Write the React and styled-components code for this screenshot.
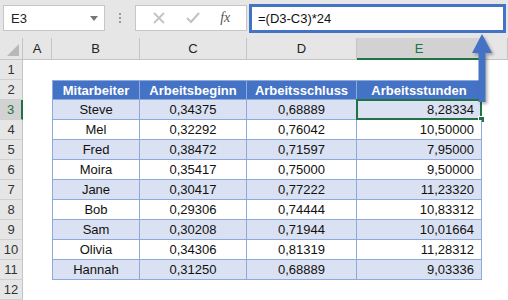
import React from "react";
import styled, { createGlobalStyle } from "styled-components";

const GlobalStyle = createGlobalStyle`
  html, body {
    margin: 0;
    padding: 0;
    background: #ffffff;
  }
  body {
    font-family: "Liberation Sans", Arial, sans-serif;
  }
`;

const Window = styled.div`
  position: relative;
  width: 508px;
  height: 300px;
  overflow: hidden;
  background: #ffffff;
`;

const Toolbar = styled.div`
  display: flex;
  align-items: flex-start;
  height: 38px;
  padding: 5px 0 0 3px;
  box-sizing: border-box;
  background: #e6e6e6;
`;

const NameBox = styled.div`
  display: flex;
  align-items: center;
  justify-content: space-between;
  width: 102px;
  height: 26px;
  padding: 0 6px 0 7px;
  box-sizing: border-box;
  background: #ffffff;
  border: 1px solid #c6c6c6;
  font-size: 13px;
  color: #222;
`;

const Caret = styled.span`
  width: 0;
  height: 0;
  border-left: 4px solid transparent;
  border-right: 4px solid transparent;
  border-top: 5px solid #777;
`;

const Grip = styled.div`
  display: flex;
  flex-direction: column;
  gap: 2px;
  width: 30px;
  align-items: center;
  padding-top: 8px;

  span {
    width: 2px;
    height: 2px;
    background: #9a9a9a;
  }
`;

const FxButtons = styled.div`
  display: flex;
  align-items: center;
  justify-content: space-around;
  width: 112px;
  height: 26px;
  padding: 0 6px;
  box-sizing: border-box;
  background: #ffffff;
  border: 1px solid #c6c6c6;
`;

const FxLabel = styled.span`
  font-family: "Liberation Serif", serif;
  font-style: italic;
  font-size: 14px;
  color: #555;
`;

const Formula = styled.div`
  display: flex;
  align-items: center;
  width: 257px;
  height: 29px;
  margin: -1px 0 0 2px;
  padding-left: 6px;
  box-sizing: border-box;
  background: #ffffff;
  border: 3px solid #4472c4;
  font-size: 13px;
  color: #111;
`;

const Sheet = styled.div`
  display: grid;
  grid-template-columns: 23px 29px 88px 107px 110px 125px 1fr;
  grid-template-rows: 22px repeat(12, 20px);
`;

const ColHead = styled.div`
  display: flex;
  align-items: center;
  justify-content: center;
  box-sizing: border-box;
  font-size: 13px;
  background: ${(p) => (p.$active ? "#d2d2d2" : "#e6e6e6")};
  color: ${(p) => (p.$active ? "#217346" : "#222")};
  border-right: 1px solid #c4c4c4;
  border-bottom: ${(p) => (p.$active ? "2px solid #217346" : "1px solid #c4c4c4")};
  padding-top: ${(p) => (p.$active ? "1px" : "0")};
`;

const Corner = styled.div`
  position: relative;
  background: #e6e6e6;
  border-right: 1px solid #c4c4c4;
  border-bottom: 1px solid #c4c4c4;
  box-sizing: border-box;

  &::after {
    content: "";
    position: absolute;
    right: 3px;
    bottom: 3px;
    border-left: 12px solid transparent;
    border-bottom: 12px solid #b8b8b8;
  }
`;

const RowHead = styled.div`
  display: flex;
  align-items: center;
  justify-content: center;
  box-sizing: border-box;
  font-size: 13px;
  background: ${(p) => (p.$active ? "#d2d2d2" : "#e6e6e6")};
  color: ${(p) => (p.$active ? "#217346" : "#333")};
  border-bottom: 1px solid #d0d0d0;
  border-right: ${(p) => (p.$active ? "2px solid #217346" : "1px solid #c4c4c4")};
`;

const Blank = styled.div`
  background: #ffffff;
`;

const Cell = styled.div`
  position: relative;
  display: flex;
  align-items: center;
  justify-content: ${(p) => (p.$right ? "flex-end" : "center")};
  padding-right: ${(p) => (p.$right ? "7px" : "0")};
  box-sizing: border-box;
  font-size: 13px;
  font-weight: ${(p) => (p.$head ? 700 : 400)};
  color: ${(p) => (p.$head ? "#ffffff" : "#111")};
  background: ${(p) => (p.$head ? "#4472c4" : p.$band ? "#d9e1f2" : "#ffffff")};
  border-right: 1px solid #8ea9db;
  border-bottom: 1px solid #8ea9db;
  border-left: ${(p) => (p.$first ? "1px solid #8ea9db" : "none")};
  border-top: ${(p) => (p.$head ? "1px solid #8ea9db" : "none")};

  ${(p) =>
    p.$selected &&
    `
    &::before {
      content: "";
      position: absolute;
      inset: -1px -1px -1px -1px;
      border: 2px solid #217346;
    }
    &::after {
      content: "";
      position: absolute;
      right: -4px;
      bottom: -4px;
      width: 5px;
      height: 5px;
      background: #217346;
      border: 1px solid #ffffff;
    }
  `}
`;

const Arrow = styled.svg`
  position: absolute;
  left: 469px;
  top: 33px;
  filter: drop-shadow(2px 2px 1.5px rgba(0, 0, 0, 0.3));
`;

const columns = ["A", "B", "C", "D", "E"];
const headers = ["Mitarbeiter", "Arbeitsbeginn", "Arbeitsschluss", "Arbeitsstunden"];

const rows = [
  ["Steve", "0,34375", "0,68889", "8,28334"],
  ["Mel", "0,32292", "0,76042", "10,50000"],
  ["Fred", "0,38472", "0,71597", "7,95000"],
  ["Moira", "0,35417", "0,75000", "9,50000"],
  ["Jane", "0,30417", "0,77222", "11,23320"],
  ["Bob", "0,29306", "0,74444", "10,83312"],
  ["Sam", "0,30208", "0,71944", "10,01664"],
  ["Olivia", "0,34306", "0,81319", "11,28312"],
  ["Hannah", "0,31250", "0,68889", "9,03336"],
];

const Cross = () => (
  <svg width="14" height="14" viewBox="0 0 14 14">
    <path d="M2 2 L12 12 M12 2 L2 12" stroke="#c3c3c3" strokeWidth="1.8" />
  </svg>
);

const Check = () => (
  <svg width="16" height="14" viewBox="0 0 16 14">
    <path d="M2 7 L6 11 L14 2" stroke="#c3c3c3" strokeWidth="2.2" fill="none" />
  </svg>
);

const App = () => (
  <Window>
    <GlobalStyle />
    <Toolbar>
      <NameBox>
        E3
        <Caret />
      </NameBox>
      <Grip>
        <span />
        <span />
        <span />
      </Grip>
      <FxButtons>
        <Cross />
        <Check />
        <FxLabel>fx</FxLabel>
      </FxButtons>
      <Formula>=(D3-C3)*24</Formula>
    </Toolbar>

    <Sheet>
      <Corner />
      {columns.map((c) => (
        <ColHead key={c} $active={c === "E"}>
          {c}
        </ColHead>
      ))}
      <ColHead />

      <RowHead>1</RowHead>
      <Blank />
      <Blank />
      <Blank />
      <Blank />
      <Blank />
      <Blank />

      <RowHead>2</RowHead>
      <Blank />
      {headers.map((h, i) => (
        <Cell key={h} $head $first={i === 0}>
          {h}
        </Cell>
      ))}
      <Blank />

      {rows.map((r, i) => (
        <React.Fragment key={r[0]}>
          <RowHead $active={i === 0}>{i + 3}</RowHead>
          <Blank />
          {r.map((v, j) => (
            <Cell
              key={j}
              $band={i % 2 === 0}
              $first={j === 0}
              $right={j === 3}
              $selected={i === 0 && j === 3}
            >
              {v}
            </Cell>
          ))}
          <Blank />
        </React.Fragment>
      ))}

      <RowHead>12</RowHead>
      <Blank />
      <Blank />
      <Blank />
      <Blank />
      <Blank />
      <Blank />
    </Sheet>

    <Arrow width="26" height="72" viewBox="0 0 26 72">
      <path d="M13 1 L23 20 L16.5 20 L16.5 69 L9.5 69 L9.5 20 L3 20 Z" fill="#4472c4" />
    </Arrow>
  </Window>
);

export default App;
